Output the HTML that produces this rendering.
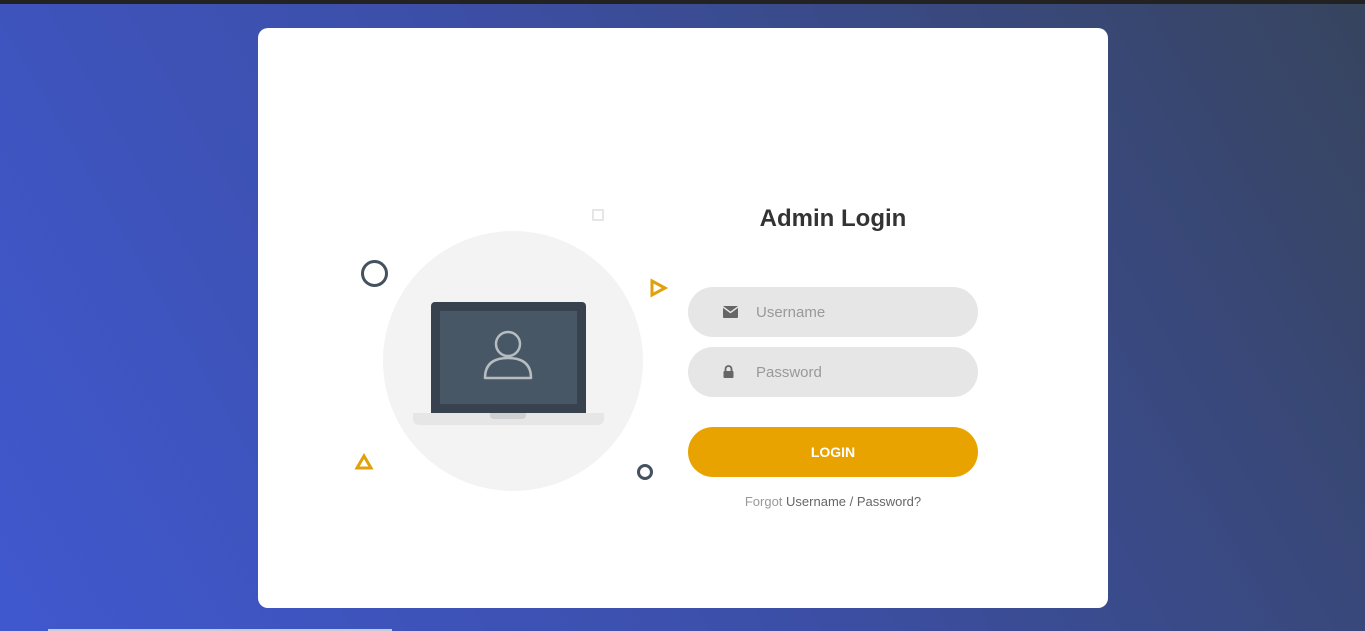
<!DOCTYPE html>
<html><head><style>
html,body{margin:0;padding:0;width:1365px;height:631px;overflow:hidden;font-family:"Liberation Sans",sans-serif}
body{background:linear-gradient(60deg,#4058cf 0%,#3c4fa8 45%,#37445e 100%);position:relative}
.top{position:absolute;left:0;top:0;width:1365px;height:4px;background:#222}
.card{position:absolute;left:258px;top:28px;width:850px;height:580px;background:#fff;border-radius:10px}
.abs{position:absolute}
.inp{position:absolute;left:430px;width:290px;height:50px;border-radius:25px;background:#e6e6e6;color:#999;font-size:15px;line-height:50px}
.inp span{position:absolute;left:68px;top:1px}
.btn{position:absolute;left:430px;top:399px;width:290px;height:50px;border-radius:25px;background:#e8a300;color:#fff;font-weight:bold;font-size:14px;text-align:center;line-height:50px}
</style></head><body>
<div class="top"></div>
<div class="card">
 <div class="abs" style="left:125px;top:203px;width:260px;height:260px;border-radius:50%;background:#f3f3f3"></div>
 <div class="abs" style="left:334px;top:181px;width:8px;height:8px;border:2px solid #e6e6e6"></div>
 <div class="abs" style="left:103px;top:232px;border:3.5px solid #44515f;border-radius:50%;box-sizing:border-box;width:27px;height:27px"></div>
 <div class="abs" style="left:379px;top:436px;width:16px;height:16px;border:3.5px solid #44515f;border-radius:50%;box-sizing:border-box"></div>
 <svg class="abs" style="left:390px;top:250px" width="22" height="22"><polygon points="4,3 17,10 4,17" fill="none" stroke="#e0a20a" stroke-width="3"/></svg>
 <svg class="abs" style="left:95px;top:424px" width="22" height="20"><polygon points="11,4 18,16 4,16" fill="none" stroke="#e0a20a" stroke-width="3"/></svg>
 <div class="abs" style="left:173px;top:274px;width:155px;height:112px;background:#38424e;border-radius:4px 4px 0 0"></div>
 <div class="abs" style="left:182px;top:283px;width:137px;height:93px;background:#475765"></div>
 <div class="abs" style="left:155px;top:385px;width:191px;height:12px;background:#e6e6e6;border-radius:0 0 6px 6px"></div>
 <div class="abs" style="left:232px;top:385px;width:36px;height:6px;background:#cfd0d2;border-radius:0 0 4px 4px"></div>
 <svg class="abs" style="left:224px;top:300px" width="52" height="54"><circle cx="26" cy="16" r="12" fill="none" stroke="#b7bcc1" stroke-width="2.5"/><path d="M3,50 Q3,30 26,30 Q49,30 49,50 Z" fill="none" stroke="#b7bcc1" stroke-width="2.5" stroke-linejoin="round"/></svg>
 <div class="abs" style="left:430px;top:177px;width:290px;text-align:center;font-weight:bold;font-size:24px;color:#333">Admin Login</div>
 <div class="inp" style="top:259px"><svg class="abs" style="left:35px;top:19px" width="15" height="12"><rect width="15" height="12" rx="1" fill="#666"/><path d="M0,1 L7.5,6.5 L15,1" fill="none" stroke="#e6e6e6" stroke-width="1.5"/></svg><span>Username</span></div>
 <div class="inp" style="top:319px"><svg class="abs" style="left:35px;top:18px" width="11" height="13"><path d="M2.5,6 V4 a3,3 0 0 1 6,0 V6" fill="none" stroke="#666" stroke-width="1.8"/><rect x="0.5" y="6" width="10" height="7" rx="1" fill="#666"/></svg><span>Password</span></div>
 <div class="btn">LOGIN</div>
 <div class="abs" style="left:430px;top:466px;width:290px;text-align:center;font-size:13px;color:#999">Forgot <span style="color:#666">Username / Password?</span></div>
</div>
<div class="abs" style="left:48px;top:629px;width:344px;height:2px;background:#c8ccd6"></div>
</body></html>
